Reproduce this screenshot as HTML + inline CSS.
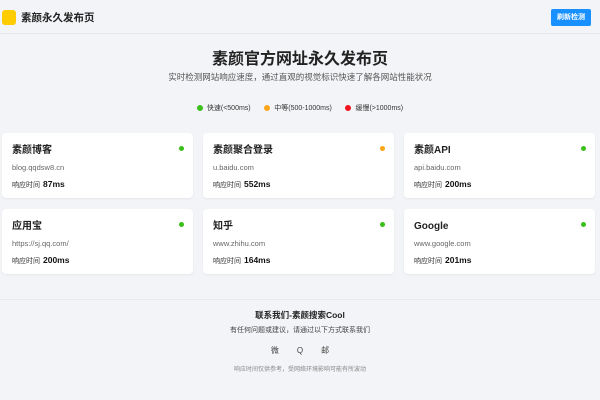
<!DOCTYPE html>
<html><head><meta charset="utf-8"><style>
*{margin:0;padding:0;box-sizing:border-box}
body{width:600px;height:400px;background:#f3f4f7;font-family:"Liberation Sans","Noto Sans CJK SC",sans-serif;color:#222;position:relative;overflow:hidden;line-height:1}
.hdr{position:absolute;left:0;top:0;width:600px;height:34px;border-bottom:1px solid #e6e7ea}
.logo{position:absolute;left:2px;top:10px;width:14px;height:15px;background:#ffcc00;border-radius:3px}
.ht{position:absolute;left:21px;top:12px;font-size:10.5px;font-weight:bold;line-height:12px}
.btn{position:absolute;left:551px;top:9px;width:40px;height:17px;background:#1890ff;color:#fff;font-size:7px;line-height:17px;text-align:center;border-radius:2px;font-weight:bold}
.c{position:absolute;left:0;width:600px;text-align:center}
.card{position:absolute;width:191px;height:65px;background:#fff;border-radius:4px;box-shadow:0 1px 2px rgba(0,0,0,.06)}
.card .t{position:absolute;left:10px;top:12px;font-size:10px;font-weight:bold;line-height:12px}
.card .u{position:absolute;left:10px;top:30px;font-size:7.5px;color:#666;line-height:9px}
.card .r{position:absolute;left:10px;top:46px;font-size:7px;color:#333;line-height:10px}
.card .r b{font-size:8.5px;margin-left:3px;color:#111}
.dot{position:absolute;left:177px;top:13px;width:5px;height:5px;border-radius:50%}
.g{background:#3bbf1a}.o{background:#faa519}.rd{background:#f0141e}
.lg{display:inline-block;width:6px;height:6px;border-radius:50%;margin:0 4px 0 0;vertical-align:-1px}
</style></head><body>
<div class="hdr"><div class="logo"></div><div class="ht">素颜永久发布页</div><div class="btn">刷新检测</div></div>
<div class="c" style="top:51px;font-size:16px;font-weight:bold;line-height:17px">素颜官方网址永久发布页</div>
<div class="c" style="top:72px;font-size:8.5px;color:#555;line-height:10px">实时检测网站响应速度，通过直观的视觉标识快速了解各网站性能状况</div>
<div class="c" style="top:104px;font-size:7px;color:#333;line-height:9px"><span class="lg g"></span>快速(&lt;500ms)&nbsp;&nbsp;&nbsp;&nbsp;&nbsp;&nbsp;&nbsp;<span class="lg o"></span>中等(500-1000ms)&nbsp;&nbsp;&nbsp;&nbsp;&nbsp;&nbsp;&nbsp;<span class="lg rd"></span>缓慢(&gt;1000ms)</div>
<div class="card" style="left:2px;top:133px"><div class="t">素颜博客</div><div class="dot g"></div><div class="u">blog.qqdsw8.cn</div><div class="r">响应时间<b>87ms</b></div></div>
<div class="card" style="left:203px;top:133px"><div class="t">素颜聚合登录</div><div class="dot o"></div><div class="u">u.baidu.com</div><div class="r">响应时间<b>552ms</b></div></div>
<div class="card" style="left:404px;top:133px"><div class="t">素颜API</div><div class="dot g"></div><div class="u">api.baidu.com</div><div class="r">响应时间<b>200ms</b></div></div>
<div class="card" style="left:2px;top:209px"><div class="t">应用宝</div><div class="dot g"></div><div class="u">https://sj.qq.com/</div><div class="r">响应时间<b>200ms</b></div></div>
<div class="card" style="left:203px;top:209px"><div class="t">知乎</div><div class="dot g"></div><div class="u">www.zhihu.com</div><div class="r">响应时间<b>164ms</b></div></div>
<div class="card" style="left:404px;top:209px"><div class="t">Google</div><div class="dot g"></div><div class="u">www.google.com</div><div class="r">响应时间<b>201ms</b></div></div>
<div style="position:absolute;left:0;top:299px;width:600px;border-top:1px solid #e8e9ec"></div>
<div class="c" style="top:310px;font-size:8.5px;font-weight:bold;line-height:10px">联系我们-素颜搜索Cool</div>
<div class="c" style="top:326px;font-size:7px;color:#444;line-height:9px">有任何问题或建议，请通过以下方式联系我们</div>
<div class="c" style="top:346px;font-size:8px;color:#444;line-height:10px"><span>微</span><span style="margin:0 18px">Q</span><span>邮</span></div>
<div class="c" style="top:366px;font-size:6px;color:#888;line-height:8px">响应时间仅供参考，受网络环境影响可能有所波动</div>
</body></html>
